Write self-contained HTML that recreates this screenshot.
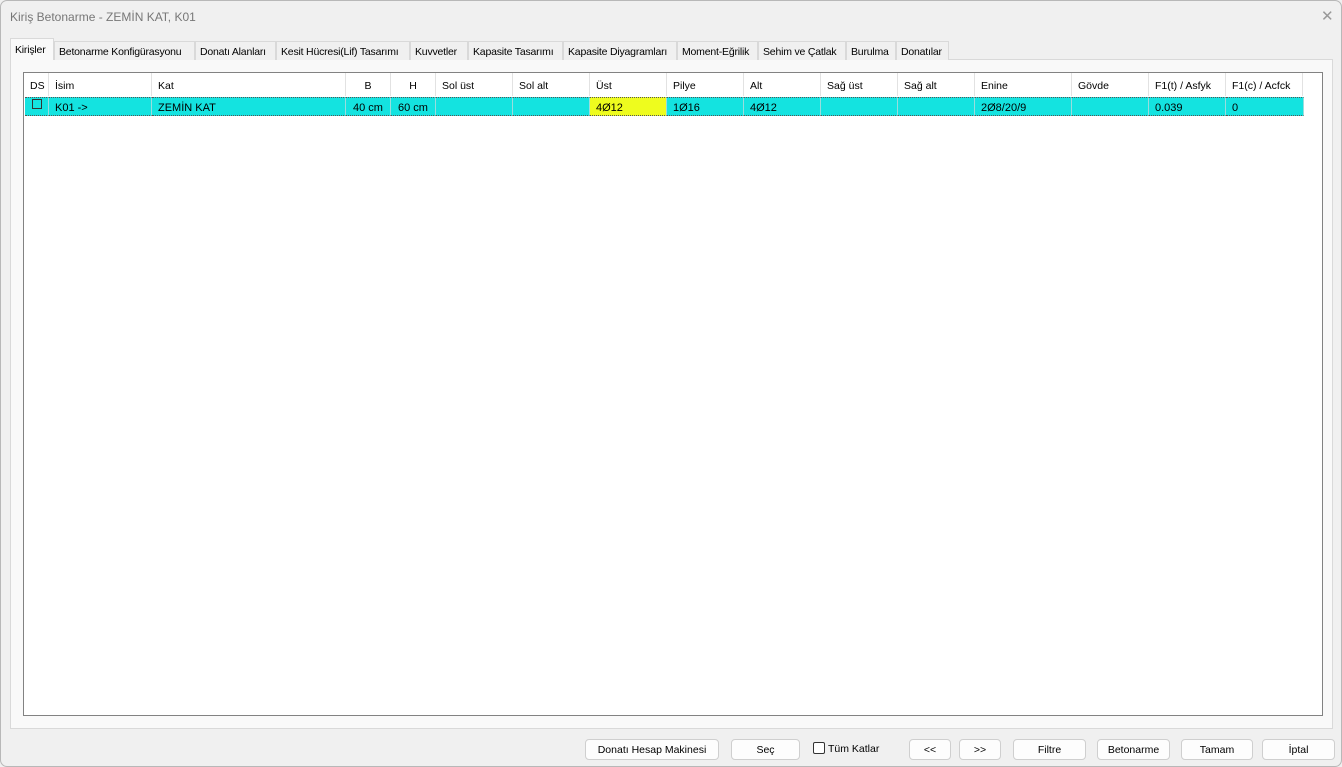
<!DOCTYPE html>
<html><head><meta charset="utf-8"><style>
*{box-sizing:border-box;margin:0;padding:0}
body{width:1342px;height:767px;background:#f0f0f0;font-family:"Liberation Sans",sans-serif;font-size:11px;color:#000;position:relative;overflow:hidden}
.win{position:absolute;left:0;top:0;width:1342px;height:767px;border:1px solid #b8b8b8;border-radius:7px;background:#f0f0f0}
.title{position:absolute;left:9px;top:9px;font-size:12px;color:#777}
.close{position:absolute;left:1320px;top:6px;font-size:15px;color:#999;font-weight:300}
.tab{position:absolute;top:40px;height:19px;background:#f0f0f0;border:1px solid #d9d9d9;border-bottom:none;padding:4px 0 0 4px;white-space:nowrap;font-size:10.5px;letter-spacing:-0.2px;overflow:hidden}
.tab.sel{top:37px;height:22px;background:#f9f9f9;padding-top:5px}
.panel{position:absolute;left:9px;top:58px;width:1323px;height:670px;background:#f9f9f9;border:1px solid #d9d9d9}
.grid{position:absolute;left:22px;top:71px;width:1300px;height:644px;background:#fff;border:1px solid #828282}
.c{position:absolute;height:23px;padding:7px 0 0 6px;border-right:1px solid #e2e2e2;white-space:nowrap;font-size:10.5px}
.r{position:absolute;height:19px;top:24px;background:#14e3e0;padding:4px 0 0 6px;border-right:1px solid #9dd;border-top:1px dotted #555;border-bottom:1px dotted #555;white-space:nowrap;font-size:11px}
.btn{position:absolute;top:738px;height:21px;background:#fdfdfd;border:1px solid #cfcfcf;border-radius:4px;text-align:center;padding-top:4px;font-size:10.5px}
</style></head><body><div class="win">
<div class="title">Kiriş Betonarme - ZEMİN KAT, K01</div>
<div class="close">✕</div>
<div class="panel"></div>
<div class="tab sel" style="left:9px;width:44px">Kirişler</div>
<div class="tab" style="left:53px;width:141px">Betonarme Konfigürasyonu</div>
<div class="tab" style="left:194px;width:81px">Donatı Alanları</div>
<div class="tab" style="left:275px;width:134px">Kesit Hücresi(Lif) Tasarımı</div>
<div class="tab" style="left:409px;width:58px">Kuvvetler</div>
<div class="tab" style="left:467px;width:95px">Kapasite Tasarımı</div>
<div class="tab" style="left:562px;width:114px">Kapasite Diyagramları</div>
<div class="tab" style="left:676px;width:81px">Moment-Eğrilik</div>
<div class="tab" style="left:757px;width:88px">Sehim ve Çatlak</div>
<div class="tab" style="left:845px;width:50px">Burulma</div>
<div class="tab" style="left:895px;width:53px">Donatılar</div>
<div class="grid">
<div class="c" style="left:0;width:25px">DS</div>
<div class="c" style="left:25px;width:103px">İsim</div>
<div class="c" style="left:128px;width:194px">Kat</div>
<div class="c" style="left:322px;width:45px;text-align:center;padding-left:0">B</div>
<div class="c" style="left:367px;width:45px;text-align:center;padding-left:0">H</div>
<div class="c" style="left:412px;width:77px">Sol üst</div>
<div class="c" style="left:489px;width:77px">Sol alt</div>
<div class="c" style="left:566px;width:77px">Üst</div>
<div class="c" style="left:643px;width:77px">Pilye</div>
<div class="c" style="left:720px;width:77px">Alt</div>
<div class="c" style="left:797px;width:77px">Sağ üst</div>
<div class="c" style="left:874px;width:77px">Sağ alt</div>
<div class="c" style="left:951px;width:97px">Enine</div>
<div class="c" style="left:1048px;width:77px">Gövde</div>
<div class="c" style="left:1125px;width:77px">F1(t) / Asfyk</div>
<div class="c" style="left:1202px;width:77px">F1(c) / Acfck</div>
<div class="r" style="left:1px;width:24px;padding:1px 0 0 7px"><span style="display:inline-block;width:10px;height:10px;border:1px solid #333"></span></div>
<div class="r" style="left:25px;width:103px">K01 -&gt;</div>
<div class="r" style="left:128px;width:194px">ZEMİN KAT</div>
<div class="r" style="left:322px;width:45px;text-align:center;padding-left:0">40 cm</div>
<div class="r" style="left:367px;width:45px;text-align:center;padding-left:0">60 cm</div>
<div class="r" style="left:412px;width:77px"></div>
<div class="r" style="left:489px;width:77px"></div>
<div class="r" style="left:566px;width:77px;background:#eefc1e">4Ø12</div>
<div class="r" style="left:643px;width:77px">1Ø16</div>
<div class="r" style="left:720px;width:77px">4Ø12</div>
<div class="r" style="left:797px;width:77px"></div>
<div class="r" style="left:874px;width:77px"></div>
<div class="r" style="left:951px;width:97px">2Ø8/20/9</div>
<div class="r" style="left:1048px;width:77px"></div>
<div class="r" style="left:1125px;width:77px">0.039</div>
<div class="r" style="left:1202px;width:78px">0</div>
</div>
<div class="btn" style="left:584px;width:134px">Donatı Hesap Makinesi</div>
<div class="btn" style="left:730px;width:69px">Seç</div>
<div style="position:absolute;left:812px;top:741px;width:12px;height:12px;border:1px solid #333;border-radius:2px;background:#fff"></div>
<div style="position:absolute;left:827px;top:742px;font-size:10.5px">Tüm Katlar</div>
<div class="btn" style="left:908px;width:42px">&lt;&lt;</div>
<div class="btn" style="left:958px;width:42px">&gt;&gt;</div>
<div class="btn" style="left:1012px;width:73px">Filtre</div>
<div class="btn" style="left:1096px;width:73px">Betonarme</div>
<div class="btn" style="left:1180px;width:72px">Tamam</div>
<div class="btn" style="left:1261px;width:73px">İptal</div>
</div></body></html>
